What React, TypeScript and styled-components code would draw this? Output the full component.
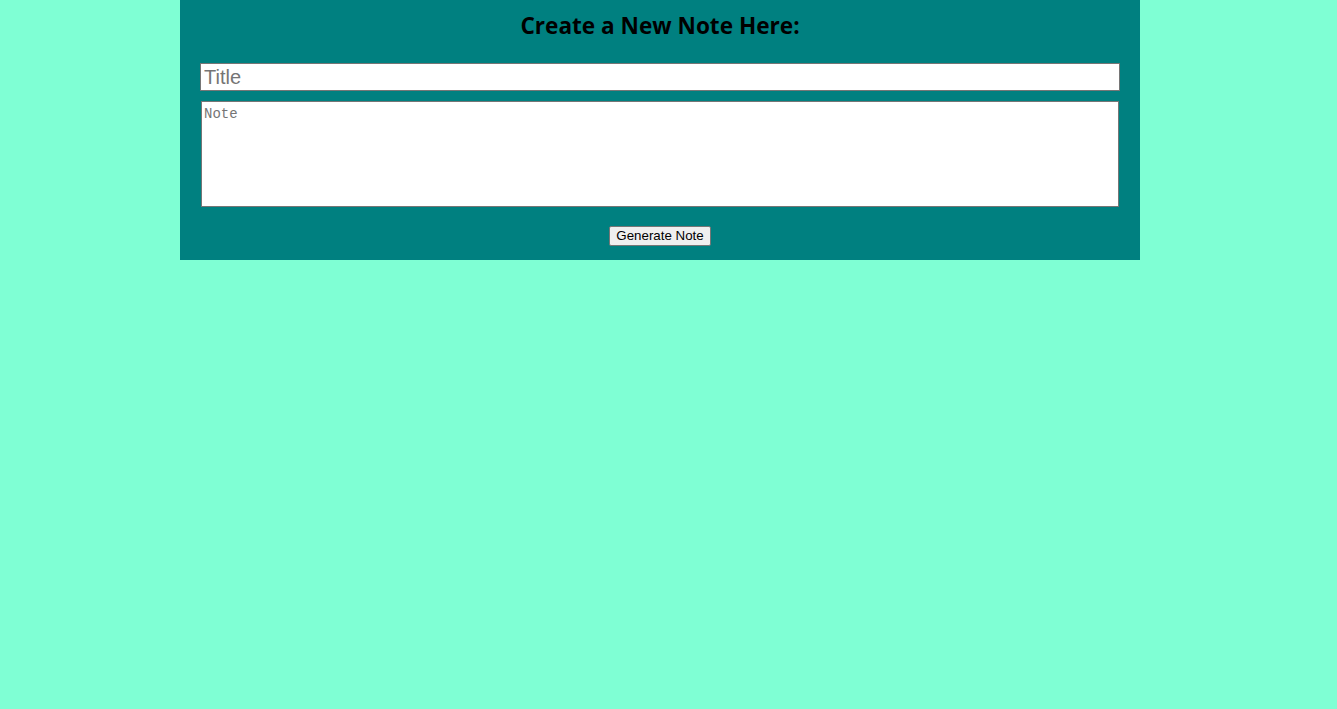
import styled, { createGlobalStyle } from "styled-components";

const GlobalStyle = createGlobalStyle`
  body {
    margin: 0;
    background: #7fffd4;
    font-family: "Liberation Sans", Arial, sans-serif;
  }
`;

const Page = styled.div`
  min-height: 709px;
  padding-right: 17px;
  background: #7fffd4;
`;

const Panel = styled.form`
  width: 960px;
  margin: 0 auto;
  box-sizing: border-box;
  padding: 0 20px 14px;
  background: #008080;
  display: flex;
  flex-direction: column;
  align-items: center;
`;

const Heading = styled.h2`
  margin: 0;
  padding: 11px 0 22px;
  line-height: 30px;
  font-family: "Open Sans", "Noto Sans", sans-serif;
  font-size: 22.6px;
  font-weight: 700;
  color: #000;
`;

const TitleInput = styled.input`
  width: 100%;
  height: 28px;
  box-sizing: border-box;
  margin: 0;
  padding: 1px 3px;
  border: 1px solid #767676;
  font-family: "Liberation Sans", Arial, sans-serif;
  font-size: 20px;
  outline: none;

  &::placeholder {
    color: #757575;
  }
`;

const NoteArea = styled.textarea`
  width: 918px;
  height: 106px;
  box-sizing: border-box;
  margin: 10px 0 0;
  padding: 4px 2px 2px;
  border: 1px solid #767676;
  font-family: "Liberation Mono", "Courier New", monospace;
  font-size: 14px;
  resize: none;
  outline: none;

  &::placeholder {
    color: #757575;
  }
`;

const GenerateButton = styled.button`
  margin-top: 19px;
  height: 20px;
  padding: 1px 6px;
  border: 1px solid #767676;
  border-radius: 2px;
  background: #efefef;
  color: #000;
  font-family: "Liberation Sans", Arial, sans-serif;
  font-size: 13.33px;
  line-height: 16px;
`;

const App = () => {
  return (
    <>
      <GlobalStyle />
      <Page>
        <Panel onSubmit={(e) => e.preventDefault()}>
          <Heading>Create a New Note Here:</Heading>
          <TitleInput type="text" placeholder="Title" />
          <NoteArea placeholder="Note" />
          <GenerateButton type="submit">Generate Note</GenerateButton>
        </Panel>
      </Page>
    </>
  );
};

export default App;
